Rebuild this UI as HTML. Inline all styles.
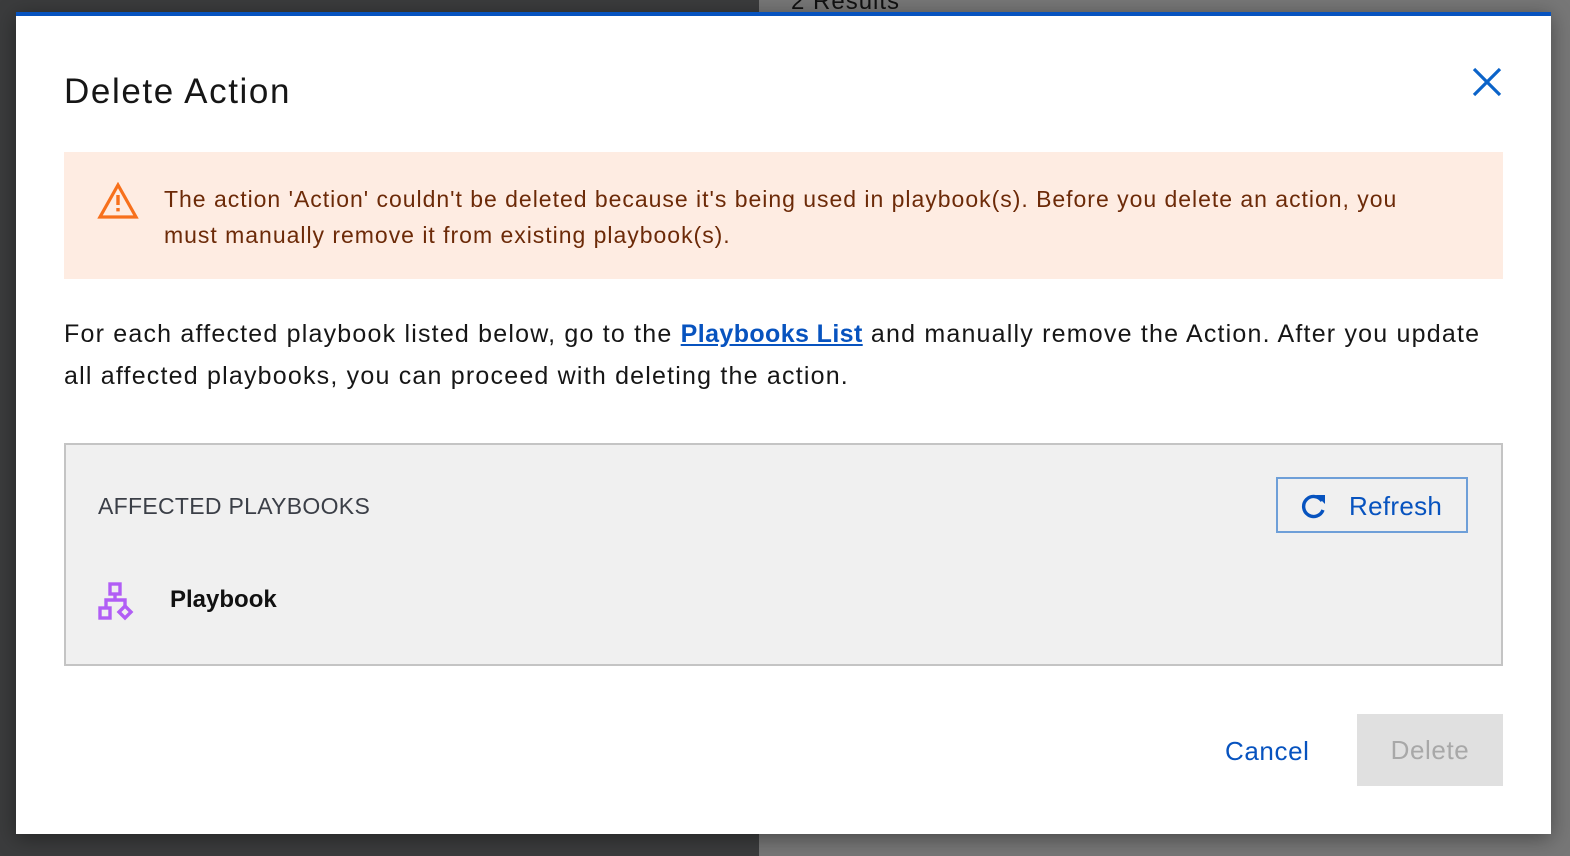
<!DOCTYPE html>
<html><head><style>
*{margin:0;padding:0;box-sizing:border-box}
body{width:1570px;height:856px;overflow:hidden;position:relative;background:#3b3c3d;font-family:"Liberation Sans",sans-serif}
.right{position:absolute;left:759px;top:0;width:811px;height:856px;background:#777}
.modal{position:absolute;left:16px;top:12px;width:1535px;height:822px;background:#fff;border-top:4px solid #0753bf;box-shadow:0 4px 20px rgba(0,0,0,.4)}
.abs{position:absolute}
</style></head><body>
<div class="right"><div class="abs" style="left:32px;top:-12px;font-size:24px;color:#111;letter-spacing:1px">2 Results</div></div>
<div class="modal">
 <div class="abs" style="left:48px;top:56px;font-size:35px;color:#161616;letter-spacing:1.6px">Delete Action</div>
 <svg class="abs" style="left:1455px;top:50px" width="32" height="32" viewBox="0 0 32 32"><path d="M3 3L29 29M29 3L3 29" stroke="#0b63c9" stroke-width="3.2"/></svg>
 <div class="abs" style="left:48px;top:136px;width:1439px;height:127px;background:#feece2"></div>
 <svg class="abs" style="left:81px;top:166px" width="42" height="38" viewBox="0 0 42 38"><path d="M21 3L39 35H3Z" fill="none" stroke="#f7701c" stroke-width="3.2" stroke-linejoin="miter"/><rect x="19.3" y="13" width="3.4" height="10" fill="#f7701c"/><rect x="19.3" y="26" width="3.4" height="3.4" fill="#f7701c"/></svg>
 <div class="abs" style="left:148px;top:165px;width:1275px;font-size:23px;line-height:36px;color:#6c2a08;letter-spacing:0.98px">The action 'Action' couldn't be deleted because it's being used in playbook(s). Before you delete an action, you must manually remove it from existing playbook(s).</div>
 <div class="abs" style="left:48px;top:297px;width:1445px;font-size:25px;line-height:42px;color:#161616;letter-spacing:1.2px">For each affected playbook listed below, go to the <span style="color:#0753bf;font-weight:bold;text-decoration:underline;letter-spacing:0.4px">Playbooks List</span> and manually remove the Action. After you update all affected playbooks, you can proceed with deleting the action.</div>
 <div class="abs" style="left:48px;top:427px;width:1439px;height:223px;background:#f0f0f0;border:2px solid #c4c4c4"></div>
 <div class="abs" style="left:82px;top:477px;font-size:23px;color:#3b3f47;letter-spacing:.3px">AFFECTED PLAYBOOKS</div>
 <div class="abs" style="left:1260px;top:461px;width:192px;height:56px;border:2px solid #6e9fd8"></div>
 <svg class="abs" style="left:1284px;top:476px" width="28" height="28" viewBox="0 0 28 28"><path d="M22 9A10 10 0 1 0 23 18" fill="none" stroke="#0753bf" stroke-width="3.4"/><path d="M16 3H25V12Z" fill="#0753bf"/></svg>
 <div class="abs" style="left:1333px;top:475px;font-size:26px;color:#0753bf;letter-spacing:0.3px">Refresh</div>
 <svg class="abs" style="left:82px;top:566px" width="42" height="40" viewBox="0 0 42 40"><g fill="none" stroke="#b15ef5" stroke-width="3.4"><rect x="12" y="2" width="10" height="10"/><path d="M17 12V18H8V26M17 18H27V24"/><rect x="2" y="26" width="10" height="10"/><path d="M27 24L33 30L27 36L21 30Z"/></g></svg>
 <div class="abs" style="left:154px;top:570px;font-size:24px;font-weight:bold;color:#111">Playbook</div>
 <div class="abs" style="left:1209px;top:720px;font-size:26px;color:#0753bf;letter-spacing:0.6px">Cancel</div>
 <div class="abs" style="left:1341px;top:698px;width:146px;height:72px;background:#e0e0e0;color:#a8a8a8;font-size:26px;text-align:center;line-height:72px;letter-spacing:0.6px">Delete</div>
</div>
</body></html>
